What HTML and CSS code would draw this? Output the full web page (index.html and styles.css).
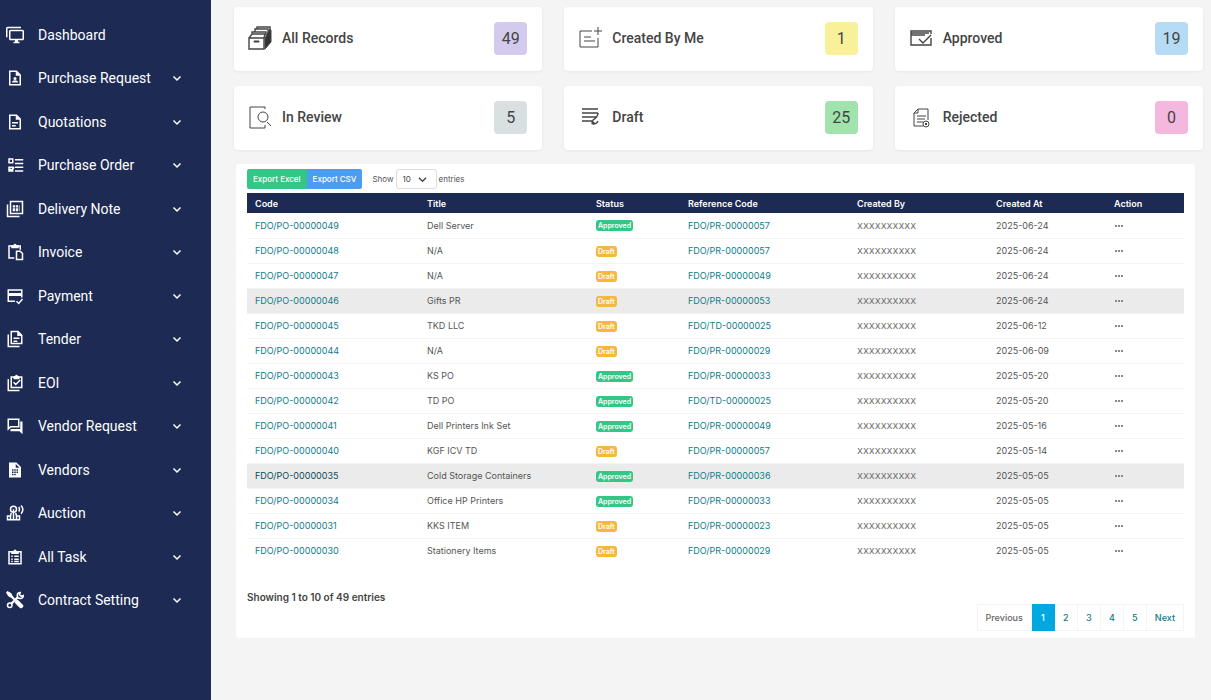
FILE: index.html
```html
<!DOCTYPE html>
<html lang="en">
<head>
    <meta charset="UTF-8">
    <meta name="viewport" content="width=device-width, initial-scale=1.0">
    <title>Purchase Order</title>
    <link rel="stylesheet" href="styles.css">
</head>
<body>
    <nav class="sidebar">
        <ul class="menu">
            <li><a href="#"><svg class="icon solid" viewBox="0 0 24 24"><path d="M22,17V7H6V17H22M22,5A2,2 0 0,1 24,7V17C24,18.1 23.1,19 22,19H16V21H18V23H10V21H12V19H6C4.9,19 4,18.1 4,17V7A2,2 0 0,1 6,5H22M2,3V15H0V3A2,2 0 0,1 2,1H20V3H2Z"/></svg><span>Dashboard</span></a></li>
            <li><a href="#"><svg class="icon" viewBox="0 0 24 24"><path d="M14 3H5v18h14V8z"/><path class="fill" d="M13 3l6 6h-6zM8 18c0-2 2-3 4-3s4 1 4 3z"/><circle class="fill" cx="12" cy="12.500" r="2"/></svg><span>Purchase Request</span><svg class="arrow" viewBox="0 0 10 10"><path d="M1.500 3.500L5 7l3.500-3.500"/></svg></a></li>
            <li><a href="#"><svg class="icon" viewBox="0 0 24 24"><path d="M14 3H5v18h14V8zM8 13h8M8 17h5"/><path class="fill" d="M13 3l6 6h-6z"/></svg><span>Quotations</span><svg class="arrow" viewBox="0 0 10 10"><path d="M1.500 3.500L5 7l3.500-3.500"/></svg></a></li>
            <li><a href="#"><svg class="icon" viewBox="0 0 24 24"><path d="M4 4h5v5H4zM4 15h5v5H4zM5 17l2 2 4-4M12 5h11M12 10h11M12 15h11M12 20h11"/></svg><span>Purchase Order</span><svg class="arrow" viewBox="0 0 10 10"><path d="M1.500 3.500L5 7l3.500-3.500"/></svg></a></li>
            <li><a href="#"><svg class="icon" viewBox="0 0 24 24"><path d="M6 2h16v16H6zM2 6v16h16"/><path class="fill" d="M9 7h3v3H9zM13 7h3v3h-3zM9 11h3v4H9zM13 11h3v4h-3zM17 7h1v8h-1z"/></svg><span>Delivery Note</span><svg class="arrow" viewBox="0 0 10 10"><path d="M1.500 3.500L5 7l3.500-3.500"/></svg></a></li>
            <li><a href="#"><svg class="icon" viewBox="0 0 24 24"><path d="M11 20H4V4h15v5M14 11h5l3 3v8h-8z"/><path class="fill" d="M7 3h3a2 2 0 0 1 4 0h3v4H7z"/></svg><span>Invoice</span><svg class="arrow" viewBox="0 0 10 10"><path d="M1.500 3.500L5 7l3.500-3.500"/></svg></a></li>
            <li><a href="#"><svg class="icon" viewBox="0 0 24 24"><path d="M12 19H3V4h18v10M14 19l3 3 5-6"/><path class="fill" d="M3 8h18v4H3z"/></svg><span>Payment</span><svg class="arrow" viewBox="0 0 10 10"><path d="M1.500 3.500L5 7l3.500-3.500"/></svg></a></li>
            <li><a href="#"><svg class="icon" viewBox="0 0 24 24"><path d="M16 2H7v16h14V7zM3 6v16h15M10 11h8M10 15h5"/><path class="fill" d="M15 2l6 6h-6z"/></svg><span>Tender</span><svg class="arrow" viewBox="0 0 10 10"><path d="M1.500 3.500L5 7l3.500-3.500"/></svg></a></li>
            <li><a href="#"><svg class="icon" viewBox="0 0 24 24"><path d="M7 4h14v14H7zM3 7v15h15M10 11l3 3 6-6"/><path class="fill" d="M10 3h2a2 2 0 0 1 4 0h2v4h-8z"/></svg><span>EOI</span><svg class="arrow" viewBox="0 0 10 10"><path d="M1.500 3.500L5 7l3.500-3.500"/></svg></a></li>
            <li><a href="#"><svg class="icon" viewBox="0 0 24 24"><path d="M3 3h14v10H6l-3 3z"/><path class="fill" d="M19 6h3v17l-4-4H6v-3h13z"/></svg><span>Vendor Request</span><svg class="arrow" viewBox="0 0 10 10"><path d="M1.500 3.500L5 7l3.500-3.500"/></svg></a></li>
            <li><a href="#"><svg class="icon solid" viewBox="0 0 24 24"><path fill-rule="evenodd" d="M4 2h10l6 6v14H4zM13 4v5h5zM8 11h2v2H8zM11 11h2v2h-2zM14 11h2v2h-2zM8 14h2v2H8zM11 14h2v2h-2zM14 14h2v2h-2zM8 17h2v2H8zM11 17h2v2h-2z"/></svg><span>Vendors</span><svg class="arrow" viewBox="0 0 10 10"><path d="M1.500 3.500L5 7l3.500-3.500"/></svg></a></li>
            <li><a href="#"><svg class="icon" viewBox="0 0 24 24"><circle cx="10" cy="7" r="4"/><path d="M10 7v13M7 12l-1 4H2v5h16v-5h-4l-1-4M6 16v4M14 16v4M17 4q2 3 0 6M20 2q5 5 0 11"/></svg><span>Auction</span><svg class="arrow" viewBox="0 0 10 10"><path d="M1.500 3.500L5 7l3.500-3.500"/></svg></a></li>
            <li><a href="#"><svg class="icon" viewBox="0 0 24 24"><path d="M4 5h16v16H4zM11 11h6M11 15h6M11 18h6M7 11h2M7 15h2M7 18h2"/><path class="fill" d="M7 4h3a2 2 0 0 1 4 0h3v4H7z"/></svg><span>All Task</span><svg class="arrow" viewBox="0 0 10 10"><path d="M1.500 3.500L5 7l3.500-3.500"/></svg></a></li>
            <li><a href="#"><svg class="icon" viewBox="0 0 24 24"><path class="handle" d="M5 5l7 7M7 17l9-9"/><path class="wide" d="M15 15l5 5"/><path d="M19 2a4 4 0 1 0 4 4l-3 1-2-2z"/><circle cx="5" cy="19" r="3"/><path class="fill" d="M2 0l5 3 2 4-2 2-4-2-3-5z"/></svg><span>Contract Setting</span><svg class="arrow" viewBox="0 0 10 10"><path d="M1.500 3.500L5 7l3.500-3.500"/></svg></a></li>
        </ul>
    </nav>

    <main class="content">
        <section class="cards">
            <div class="card">
                <svg class="card-icon" viewBox="0 0 24 24"><path class="bold" d="M1 12h15v11H1zM1 12l3-4h13l-1 4M4 8V6h14v3M7 6V3h13v4M9 3V1h13v3"/><path class="dark" d="M17 12l5-9 1 1v12l-6 7z"/><path class="dark" d="M6 15h5v1H6z"/></svg>
                <h2>All Records</h2>
                <span class="count purple">49</span>
            </div>
            <div class="card">
                <svg class="card-icon" viewBox="0 0 24 24"><path d="M14 5H2v16h18v-9M6 11h7M6 15h11M20 1v8M16 5h8"/></svg>
                <h2>Created By Me</h2>
                <span class="count yellow">1</span>
            </div>
            <div class="card">
                <svg class="card-icon" viewBox="0 0 24 24"><path class="bold" d="M22 8V5H2v14h20v-7M2 7h18M2 9h14M10 13l4 4 8-8"/></svg>
                <h2>Approved</h2>
                <span class="count blue">19</span>
            </div>
            <div class="card">
                <svg class="card-icon" viewBox="0 0 24 24"><path d="M17 4V2H2v21h15v-3M19 17l4 4"/><circle cx="15" cy="12" r="5"/></svg>
                <h2>In Review</h2>
                <span class="count gray">5</span>
            </div>
            <div class="card">
                <svg class="card-icon" viewBox="0 0 24 24"><path class="bold" d="M4 4h16M4 8h16M4 12h14M4 16h10M20 8q0 4-5 7-2 4 0 4 4 0 5-3M14 16l3 3"/></svg>
                <h2>Draft</h2>
                <span class="count green">25</span>
            </div>
            <div class="card">
                <svg class="card-icon" viewBox="0 0 24 24"><path d="M14 21H5V8l4-4h10v11M9 4v4H5M8 11h9M8 14h8M8 17h6"/><circle cx="17" cy="19" r="3"/><path d="M16 18l2 2M18 18l-2 2"/></svg>
                <h2>Rejected</h2>
                <span class="count pink">0</span>
            </div>
        </section>

        <section class="panel">
            <div class="toolbar">
                <div class="export">
                    <button type="button" class="excel">Export Excel</button><button type="button" class="csv">Export CSV</button>
                </div>
                <label for="length">Show</label>
                <select id="length">
                    <option>10</option>
                    <option>25</option>
                    <option>50</option>
                </select>
                <label for="length">entries</label>
            </div>

            <table class="orders">
                <colgroup>
                    <col class="c-code">
                    <col class="c-title">
                    <col class="c-status">
                    <col class="c-ref">
                    <col class="c-by">
                    <col class="c-at">
                    <col class="c-action">
                </colgroup>
                <thead>
                    <tr>
                        <th>Code</th>
                        <th>Title</th>
                        <th>Status</th>
                        <th>Reference Code</th>
                        <th>Created By</th>
                        <th>Created At</th>
                        <th>Action</th>
                    </tr>
                </thead>
                <tbody>
                    <tr>
                        <td><a href="#">FDO/PO-00000049</a></td>
                        <td>Dell Server</td>
                        <td><span class="tag approved">Approved</span></td>
                        <td><a href="#">FDO/PR-00000057</a></td>
                        <td class="user">xxxxxxxxxx</td>
                        <td>2025-06-24</td>
                        <td><button type="button" class="more" aria-label="Actions"><svg viewBox="0 0 9 3"><path d="M0 1h2v2H0zM3 1h2v2H3zM6 1h2v2H6z"/></svg></button></td>
                    </tr>
                    <tr>
                        <td><a href="#">FDO/PO-00000048</a></td>
                        <td>N/A</td>
                        <td><span class="tag draft">Draft</span></td>
                        <td><a href="#">FDO/PR-00000057</a></td>
                        <td class="user">xxxxxxxxxx</td>
                        <td>2025-06-24</td>
                        <td><button type="button" class="more" aria-label="Actions"><svg viewBox="0 0 9 3"><path d="M0 1h2v2H0zM3 1h2v2H3zM6 1h2v2H6z"/></svg></button></td>
                    </tr>
                    <tr>
                        <td><a href="#">FDO/PO-00000047</a></td>
                        <td>N/A</td>
                        <td><span class="tag draft">Draft</span></td>
                        <td><a href="#">FDO/PR-00000049</a></td>
                        <td class="user">xxxxxxxxxx</td>
                        <td>2025-06-24</td>
                        <td><button type="button" class="more" aria-label="Actions"><svg viewBox="0 0 9 3"><path d="M0 1h2v2H0zM3 1h2v2H3zM6 1h2v2H6z"/></svg></button></td>
                    </tr>
                    <tr class="marked">
                        <td><a href="#">FDO/PO-00000046</a></td>
                        <td>Gifts PR</td>
                        <td><span class="tag draft">Draft</span></td>
                        <td><a href="#">FDO/PR-00000053</a></td>
                        <td class="user">xxxxxxxxxx</td>
                        <td>2025-06-24</td>
                        <td><button type="button" class="more" aria-label="Actions"><svg viewBox="0 0 9 3"><path d="M0 1h2v2H0zM3 1h2v2H3zM6 1h2v2H6z"/></svg></button></td>
                    </tr>
                    <tr>
                        <td><a href="#">FDO/PO-00000045</a></td>
                        <td>TKD LLC</td>
                        <td><span class="tag draft">Draft</span></td>
                        <td><a href="#">FDO/TD-00000025</a></td>
                        <td class="user">xxxxxxxxxx</td>
                        <td>2025-06-12</td>
                        <td><button type="button" class="more" aria-label="Actions"><svg viewBox="0 0 9 3"><path d="M0 1h2v2H0zM3 1h2v2H3zM6 1h2v2H6z"/></svg></button></td>
                    </tr>
                    <tr>
                        <td><a href="#">FDO/PO-00000044</a></td>
                        <td>N/A</td>
                        <td><span class="tag draft">Draft</span></td>
                        <td><a href="#">FDO/PR-00000029</a></td>
                        <td class="user">xxxxxxxxxx</td>
                        <td>2025-06-09</td>
                        <td><button type="button" class="more" aria-label="Actions"><svg viewBox="0 0 9 3"><path d="M0 1h2v2H0zM3 1h2v2H3zM6 1h2v2H6z"/></svg></button></td>
                    </tr>
                    <tr>
                        <td><a href="#">FDO/PO-00000043</a></td>
                        <td>KS PO</td>
                        <td><span class="tag approved">Approved</span></td>
                        <td><a href="#">FDO/PR-00000033</a></td>
                        <td class="user">xxxxxxxxxx</td>
                        <td>2025-05-20</td>
                        <td><button type="button" class="more" aria-label="Actions"><svg viewBox="0 0 9 3"><path d="M0 1h2v2H0zM3 1h2v2H3zM6 1h2v2H6z"/></svg></button></td>
                    </tr>
                    <tr>
                        <td><a href="#">FDO/PO-00000042</a></td>
                        <td>TD PO</td>
                        <td><span class="tag approved">Approved</span></td>
                        <td><a href="#">FDO/TD-00000025</a></td>
                        <td class="user">xxxxxxxxxx</td>
                        <td>2025-05-20</td>
                        <td><button type="button" class="more" aria-label="Actions"><svg viewBox="0 0 9 3"><path d="M0 1h2v2H0zM3 1h2v2H3zM6 1h2v2H6z"/></svg></button></td>
                    </tr>
                    <tr>
                        <td><a href="#">FDO/PO-00000041</a></td>
                        <td>Dell Printers Ink Set</td>
                        <td><span class="tag approved">Approved</span></td>
                        <td><a href="#">FDO/PR-00000049</a></td>
                        <td class="user">xxxxxxxxxx</td>
                        <td>2025-05-16</td>
                        <td><button type="button" class="more" aria-label="Actions"><svg viewBox="0 0 9 3"><path d="M0 1h2v2H0zM3 1h2v2H3zM6 1h2v2H6z"/></svg></button></td>
                    </tr>
                    <tr>
                        <td><a href="#">FDO/PO-00000040</a></td>
                        <td>KGF ICV TD</td>
                        <td><span class="tag draft">Draft</span></td>
                        <td><a href="#">FDO/PR-00000057</a></td>
                        <td class="user">xxxxxxxxxx</td>
                        <td>2025-05-14</td>
                        <td><button type="button" class="more" aria-label="Actions"><svg viewBox="0 0 9 3"><path d="M0 1h2v2H0zM3 1h2v2H3zM6 1h2v2H6z"/></svg></button></td>
                    </tr>
                    <tr class="marked">
                        <td><a href="#" class="active">FDO/PO-00000035</a></td>
                        <td>Cold Storage Containers</td>
                        <td><span class="tag approved">Approved</span></td>
                        <td><a href="#">FDO/PR-00000036</a></td>
                        <td class="user">xxxxxxxxxx</td>
                        <td>2025-05-05</td>
                        <td><button type="button" class="more" aria-label="Actions"><svg viewBox="0 0 9 3"><path d="M0 1h2v2H0zM3 1h2v2H3zM6 1h2v2H6z"/></svg></button></td>
                    </tr>
                    <tr>
                        <td><a href="#">FDO/PO-00000034</a></td>
                        <td>Office HP Printers</td>
                        <td><span class="tag approved">Approved</span></td>
                        <td><a href="#">FDO/PR-00000033</a></td>
                        <td class="user">xxxxxxxxxx</td>
                        <td>2025-05-05</td>
                        <td><button type="button" class="more" aria-label="Actions"><svg viewBox="0 0 9 3"><path d="M0 1h2v2H0zM3 1h2v2H3zM6 1h2v2H6z"/></svg></button></td>
                    </tr>
                    <tr>
                        <td><a href="#">FDO/PO-00000031</a></td>
                        <td>KKS ITEM</td>
                        <td><span class="tag draft">Draft</span></td>
                        <td><a href="#">FDO/PR-00000023</a></td>
                        <td class="user">xxxxxxxxxx</td>
                        <td>2025-05-05</td>
                        <td><button type="button" class="more" aria-label="Actions"><svg viewBox="0 0 9 3"><path d="M0 1h2v2H0zM3 1h2v2H3zM6 1h2v2H6z"/></svg></button></td>
                    </tr>
                    <tr>
                        <td><a href="#">FDO/PO-00000030</a></td>
                        <td>Stationery Items</td>
                        <td><span class="tag draft">Draft</span></td>
                        <td><a href="#">FDO/PR-00000029</a></td>
                        <td class="user">xxxxxxxxxx</td>
                        <td>2025-05-05</td>
                        <td><button type="button" class="more" aria-label="Actions"><svg viewBox="0 0 9 3"><path d="M0 1h2v2H0zM3 1h2v2H3zM6 1h2v2H6z"/></svg></button></td>
                    </tr>
                </tbody>
            </table>

            <div class="table-footer">
                <p>Showing 1 to 10 of 49 entries</p>
                <div class="pages">
                    <a href="#" class="prev">Previous</a>
                    <a href="#" class="current">1</a>
                    <a href="#">2</a>
                    <a href="#">3</a>
                    <a href="#">4</a>
                    <a href="#">5</a>
                    <a href="#">Next</a>
                </div>
            </div>
        </section>
    </main>
</body>
</html>
```

FILE: styles.css
```css
* {
    box-sizing: border-box;
}

body {
    margin: 0;
    display: flex;
    min-height: 100vh;
    font-family: Inter, 'Liberation Sans', sans-serif;
    font-size: 9px;
    color: #555;
    background-color: #f4f4f4;
}

a {
    color: #0e7c8a;
    text-decoration: none;
}

button,
select {
    font-family: inherit;
    font-size: inherit;
}

/* sidebar */
.sidebar {
    flex: 0 0 211px;
    background-color: #1c2a54;
    padding-top: 13px;
}

.menu {
    list-style: none;
    margin: 0;
    padding: 0;
    display: flex;
    flex-direction: column;
    height: 87vh;
    min-height: 560px;
}

.menu li {
    flex: 1;
    display: flex;
}

.menu a {
    flex: 1;
    display: flex;
    align-items: center;
    padding: 0 29px 0 6px;
    color: #fff;
    font-family: Roboto, sans-serif;
    font-size: 14px;
}

.menu span {
    flex: 1;
    margin-left: 14px;
}

.icon {
    width: 18px;
    height: 18px;
    fill: none;
    stroke: #fff;
    stroke-width: 2;
}

.icon .fill {
    fill: #fff;
    stroke: none;
}

.icon .handle {
    stroke-width: 3;
}

.icon .wide {
    stroke-width: 6;
    stroke-linecap: round;
}

.solid {
    fill: #fff;
    stroke: none;
}

.arrow {
    width: 10px;
    height: 10px;
    fill: none;
    stroke: #fff;
    stroke-width: 1.5;
}

/* summary cards */
.content {
    flex: 1;
    min-width: 0;
    padding: 7px 8px 0 23px;
}

.cards {
    display: grid;
    grid-template-columns: repeat(3, 1fr);
    gap: 15px 22px;
}

.card {
    display: flex;
    align-items: center;
    height: 64px;
    padding: 0 15px 2px 14px;
    background-color: #fff;
    border-radius: 4px;
    box-shadow: 0 1px 3px rgba(0, 0, 0, 0.06);
}

.card h2 {
    flex: 1;
    margin: 0 0 0 10px;
    font-family: Roboto, sans-serif;
    font-size: 14px;
    font-weight: 500;
    color: #444;
}

.card-icon {
    width: 24px;
    height: 24px;
    fill: none;
    stroke: #444;
}

.card-icon .bold {
    stroke-width: 1.4;
}

.card-icon .dark {
    fill: #333;
}

.count {
    width: 33px;
    line-height: 33px;
    border-radius: 4px;
    text-align: center;
    font-family: Roboto, sans-serif;
    font-size: 16px;
    color: #444;
}

.purple {
    background-color: #d3cbed;
}

.yellow {
    background-color: #f9f19a;
}

.blue {
    background-color: #b5dbf5;
}

.gray {
    background-color: #d8e0e2;
}

.green {
    background-color: #a0e3ad;
}

.pink {
    background-color: #f4b8df;
}

/* table panel */
.panel {
    margin: 14px 8px 0 2px;
    padding: 5px 11px 7px;
    background-color: #fff;
    border-radius: 3px;
}

.toolbar {
    display: flex;
    align-items: center;
    gap: 2px;
    height: 20px;
    margin-bottom: 4px;
    font-size: 8px;
}

.export {
    display: flex;
    margin-right: 8px;
}

.export button {
    height: 20px;
    padding: 0 6px;
    border: none;
    color: #fff;
    font-weight: 500;
}

.export .excel {
    background-color: #34c684;
    border-radius: 2px 0 0 2px;
}

.export .csv {
    background-color: #4c9cf0;
    border-radius: 0 2px 2px 0;
}

.toolbar select {
    appearance: none;
    width: 41px;
    height: 20px;
    padding: 0 6px;
    border: 1px solid #ddd;
    border-radius: 3px;
    background: #fff url("data:image/svg+xml,%3Csvg xmlns='http://www.w3.org/2000/svg' viewBox='0 0 10 10'%3E%3Cpath d='M1 3l4 4 4-4' fill='none' stroke='%23444' stroke-width='1.5'/%3E%3C/svg%3E") no-repeat right 9px center / 9px;
    color: #444;
}

.orders {
    width: 100%;
    table-layout: fixed;
    border-collapse: collapse;
}

.c-code {
    width: 172px;
}

.c-title,
.c-ref {
    width: 169px;
}

.c-status {
    width: 92px;
}

.c-by {
    width: 139px;
}

.c-at {
    width: 118px;
}

.c-action {
    width: 78px;
}

.orders th {
    height: 20px;
    padding: 0 8px;
    background-color: #1c2a54;
    color: #fff;
    font-weight: 600;
    text-align: left;
}

.orders td {
    height: 25px;
    padding: 0 8px;
    border-bottom: 1px solid #f4f4f4;
}

.orders tr:last-child td {
    border-bottom: none;
}

.marked {
    background-color: #ebebeb;
}

.orders .active {
    color: #0b4a56;
}

.orders .user {
    font-family: 'DejaVu Sans', sans-serif;
    font-size: 10px;
    color: #777;
}

.tag {
    display: inline-block;
    padding: 0 2px;
    line-height: 11px;
    border-radius: 3px;
    color: #fff;
    font-size: 7px;
    font-weight: 600;
    vertical-align: middle;
}

.approved {
    background-color: #34c684;
}

.draft {
    background-color: #f5b83d;
}

.more {
    display: block;
    padding: 0 1px;
    border: none;
    background: none;
}

.more svg {
    display: block;
    width: 9px;
    height: 3px;
    fill: #888;
}

.table-footer {
    margin-top: 27px;
}

.table-footer p {
    margin: 0;
    line-height: 14px;
    font-size: 10px;
    font-weight: 600;
    color: #444;
}

.pages {
    display: flex;
    justify-content: flex-end;
}

.pages a {
    min-width: 23px;
    padding: 0 8px;
    line-height: 25px;
    border: 1px solid #f1f5f6;
    border-left: none;
    text-align: center;
    font-weight: 500;
}

.pages .prev {
    border-left: 1px solid #f1f5f6;
    color: #666;
}

.pages .current {
    background-color: #00a8e1;
    border-color: #00a8e1;
    color: #fff;
}
```
